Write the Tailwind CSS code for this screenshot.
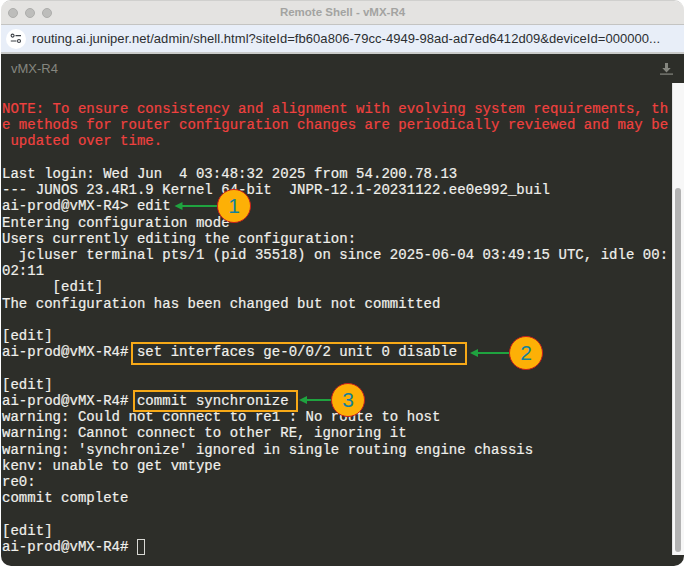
<!DOCTYPE html>
<html lang="en">
<head>
<meta charset="UTF-8">
<title>Remote Shell - vMX-R4</title>
<script src="https://cdn.jsdelivr.net/npm/@tailwindcss/browser@4"></script>
</head>
<body class="bg-white overflow-hidden">
<div class="relative w-[684px] h-[567px] overflow-hidden font-['Liberation_Sans',sans-serif]">
  <div class="flex flex-col h-[566px] ml-[1px] rounded-t-[10px] rounded-b-[10px] overflow-hidden border-t border-[#d0d0ce]">
    <!-- title bar -->
    <div class="relative h-[24px] shrink-0 bg-[#e4e3e1] border-b border-[#c4c4c2] flex items-center pl-[7px] gap-[7px]">
      <span class="w-[10px] h-[10px] rounded-full bg-[#bdbdbb] border border-[#adadab]"></span>
      <span class="w-[10px] h-[10px] rounded-full bg-[#bdbdbb] border border-[#adadab]"></span>
      <span class="w-[10px] h-[10px] rounded-full bg-[#bdbdbb] border border-[#adadab]"></span>
      <div class="absolute inset-x-0 top-0 h-[24px] flex items-center justify-center text-[11.5px] font-bold text-[#a3a3a1]">Remote Shell - vMX-R4</div>
    </div>
    <!-- url bar -->
    <div class="h-[29px] shrink-0 bg-[#e8eef8] border-b-2 border-[#c9cac9] flex items-center pl-[5px] gap-[6px]">
      <span class="w-[20px] h-[20px] rounded-full bg-white flex items-center justify-center">
        <svg width="12" height="11" viewBox="0 0 12 11" fill="none" stroke="#3b3f45" stroke-width="1.1">
          <circle cx="2.6" cy="2.6" r="1.5"/><path d="M5.5 2.6h5.5"/>
          <circle cx="9" cy="8" r="1.5"/><path d="M.8 8h5.7"/>
        </svg>
      </span>
      <span class="text-[13px] tracking-[0.05px] text-[#2c2e31] whitespace-nowrap">routing.ai.juniper.net/admin/shell.html?siteId=fb60a806-79cc-4949-98ad-ad7ed6412d09&amp;deviceId=000000...</span>
    </div>
    <!-- terminal panel -->
    <div class="flex-1 bg-[#2d2e29] flex flex-col min-h-0">
      <div class="h-[29px] shrink-0 flex items-center justify-between pl-[10px] pr-[11px]">
        <span class="text-[13px] text-[#85867f]">vMX-R4</span>
        <svg width="13" height="12" viewBox="0 0 13 12" fill="#85867f">
          <path d="M5 0h3v5h2.700L6.500 9.500 2.300 5H5z"/><rect x="0" y="10.500" width="13" height="1.200"/>
        </svg>
      </div>
      <div class="flex flex-1 min-h-0">
        <pre class="flex-1 min-w-0 pt-[18px] pl-[1px] overflow-hidden font-['Liberation_Mono',monospace] text-[14px] tracking-[0.03px] leading-[16.22px] text-[#f0f0ec] [-webkit-text-stroke:0.2px] whitespace-pre"><span class="text-[#f0413f]">NOTE: To ensure consistency and alignment with evolving system requirements, th
e methods for router configuration changes are periodically reviewed and may be
 updated over time.</span>

Last login: Wed Jun  4 03:48:32 2025 from 54.200.78.13
--- JUNOS 23.4R1.9 Kernel 64-bit  JNPR-12.1-20231122.ee0e992_buil
ai-prod@vMX-R4&gt; edit
Entering configuration mode
Users currently editing the configuration:
  jcluser terminal pts/1 (pid 35518) on since 2025-06-04 03:49:15 UTC, idle 00:
02:11
      [edit]
The configuration has been changed but not committed

[edit]
ai-prod@vMX-R4# set interfaces ge-0/0/2 unit 0 disable

[edit]
ai-prod@vMX-R4# commit synchronize
warning: Could not connect to re1 : No route to host
warning: Cannot connect to other RE, ignoring it
warning: 'synchronize' ignored in single routing engine chassis
kenv: unable to get vmtype
re0:
commit complete

[edit]
ai-prod@vMX-R4# <span class="inline-block w-[8px] h-[16px] border border-[#d8d8d4] align-[-4px]"></span></pre>
        <!-- scrollbar -->
        <div class="w-[12px] shrink-0 bg-[#f7f7f7] border-l border-[#e4e4e4] mb-[11px] flex flex-col pl-[2px] pr-[3px] pt-[105px] pb-[3px]">
          <div class="flex-1 rounded-full bg-[#b3b3b3]"></div>
        </div>
      </div>
    </div>
  </div>

  <!-- annotations -->
  <div class="absolute left-[131px] top-[342px] w-[336px] h-[23px] border-2 border-[#f7a917]"></div>
  <div class="absolute left-[133px] top-[390px] w-[165px] h-[22px] border-2 border-[#f7a917]"></div>

  <svg class="absolute left-0 top-0" width="684" height="567" fill="none">
    <g stroke="#1fa33f" stroke-width="2" fill="#1fa33f">
      <path d="M180 206h38"/><path d="M174.500 206l8-4v8z" stroke="none"/>
      <path d="M477 353h34"/><path d="M470 353l8-4v8z" stroke="none"/>
      <path d="M305 400h26"/><path d="M299 400l8-4v8z" stroke="none"/>
    </g>
  </svg>

  <div class="absolute left-[217px] top-[189px] w-[34px] h-[34px] rounded-full bg-[#fdb006] border border-[#c8201a] flex items-center justify-center text-[21px] text-[#14819a]">1</div>
  <div class="absolute left-[509px] top-[336px] w-[34px] h-[34px] rounded-full bg-[#fdb006] border border-[#c8201a] flex items-center justify-center text-[21px] text-[#14819a]">2</div>
  <div class="absolute left-[331px] top-[383px] w-[34px] h-[34px] rounded-full bg-[#fdb006] border border-[#c8201a] flex items-center justify-center text-[21px] text-[#14819a]">3</div>
</div>
</body>
</html>
